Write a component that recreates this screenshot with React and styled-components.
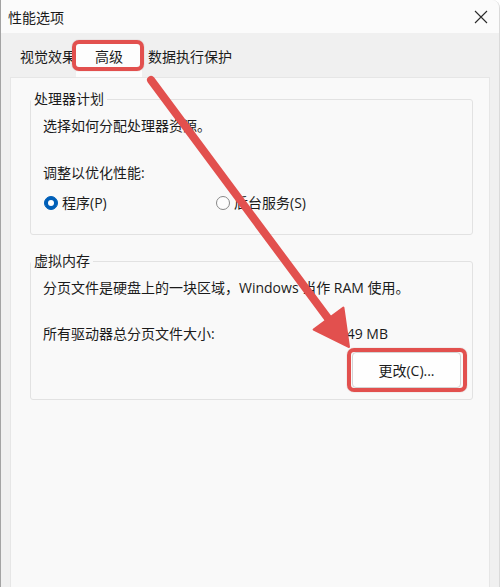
import React from 'react'
import styled, { createGlobalStyle } from 'styled-components'

const GlobalStyle = createGlobalStyle`
  * { box-sizing: border-box; }
  body {
    margin: 0;
    background: #ffffff;
    font-family: "Open Sans", "Noto Sans CJK SC", sans-serif;
    color: #1b1b1b;
  }
`

const Window = styled.div`
  position: relative;
  width: 500px;
  height: 587px;
  display: flex;
  flex-direction: column;
  background: #f0f0f0;
  border-left: 1px solid #a3a3a3;
  border-right: 1px solid #dadada;
  border-top-right-radius: 8px;
  overflow: hidden;
`

const TitleBar = styled.div`
  height: 33px;
  flex: none;
  display: flex;
  align-items: center;
  justify-content: space-between;
  padding: 0 10px 0 7px;
  background: #fbfbfb;
  font-size: 14px;
`

const CloseButton = styled.div`
  width: 16px;
  height: 16px;
  display: flex;
  align-items: center;
  justify-content: center;
  color: #2b2b2b;
`

const TabStrip = styled.div`
  height: 44px;
  flex: none;
  display: flex;
  align-items: flex-end;
  padding-left: 11px;
  font-size: 14px;
`

const Tab = styled.div`
  position: relative;
  height: 34px;
  line-height: 20px;
  padding: 4px ${({ $padR }) => $padR || 0}px 0 ${({ $padL }) => $padL || 0}px;
  width: ${({ $width }) => ($width ? `${$width}px` : 'auto')};
  text-align: ${({ $active }) => ($active ? 'center' : 'left')};
  background: ${({ $active }) => ($active ? '#fdfdfd' : 'transparent')};
  z-index: ${({ $active }) => ($active ? 1 : 0)};
  white-space: nowrap;
`

const Highlight = styled.span`
  position: absolute;
  left: ${({ $l }) => $l}px;
  top: ${({ $t }) => $t}px;
  width: ${({ $w }) => $w}px;
  height: ${({ $h }) => $h}px;
  border: 4px solid #e2504e;
  border-radius: 7px;
  box-shadow: 0 0 1px rgba(120, 20, 20, 0.5);
  pointer-events: none;
`

const Body = styled.div`
  flex: 1;
  display: flex;
  padding: 0 9px 0 9px;
`

const Panel = styled.div`
  flex: 1;
  background: #f9f9f9;
  border: 1px solid #e6e6e6;
  border-bottom: none;
  padding: 11px 16px 0 19px;
  font-size: 14px;
`

const Group = styled.fieldset`
  margin: ${({ $mt }) => $mt || 0}px 0 0 0;
  padding: 0 11px ${({ $pb }) => $pb}px 12px;
  border: 1px solid #e2e2e2;
  border-radius: 3px;
  min-width: 0;
`

const Legend = styled.legend`
  margin-left: -12px;
  padding: 0 3px;
  line-height: 20px;
  font-size: 14px;
`

const Line = styled.div`
  margin-top: ${({ $mt }) => $mt || 0}px;
  line-height: 20px;
  white-space: nowrap;
`

const SizeRow = styled.div`
  margin-top: ${({ $mt }) => $mt || 0}px;
  display: flex;
  justify-content: space-between;
  padding-right: 73px;
  line-height: 20px;
`

const RadioRow = styled.div`
  margin-top: ${({ $mt }) => $mt || 0}px;
  display: flex;
  align-items: center;
  line-height: 20px;
`

const RadioOption = styled.label`
  display: flex;
  align-items: center;
  gap: 4px;
  width: ${({ $width }) => ($width ? `${$width}px` : 'auto')};
  padding-left: 1px;
`

const RadioDot = styled.span`
  width: 14px;
  height: 14px;
  border-radius: 50%;
  display: flex;
  align-items: center;
  justify-content: center;
  background: ${({ $checked }) => ($checked ? '#005fb8' : '#fdfdfd')};
  border: 1px solid ${({ $checked }) => ($checked ? '#005fb8' : '#888888')};
  &::after {
    content: '';
    display: ${({ $checked }) => ($checked ? 'block' : 'none')};
    width: 6px;
    height: 6px;
    border-radius: 50%;
    background: #ffffff;
  }
`

const ButtonRow = styled.div`
  margin-top: 8px;
  display: flex;
  justify-content: flex-end;
`

const ChangeButton = styled.div`
  position: relative;
  width: 109px;
  height: 36px;
  display: flex;
  align-items: center;
  justify-content: center;
  background: #fefefe;
  border: 1px solid #d4d4d4;
  border-radius: 4px;
  font-size: 14px;
`

const Overlay = styled.svg`
  position: absolute;
  left: 0;
  top: 0;
  pointer-events: none;
  z-index: 5;
`

const App = () => {
  return (
    <>
      <GlobalStyle />
      <Window>
        <TitleBar>
          <span>性能选项</span>
          <CloseButton>
            <svg width="14" height="14" viewBox="0 0 14 14">
              <path d="M1 1 L13 13 M13 1 L1 13" stroke="currentColor" strokeWidth="1.1" fill="none" />
            </svg>
          </CloseButton>
        </TitleBar>

        <TabStrip>
          <Tab $padL={8} $width={64}>视觉效果</Tab>
          <Tab $active $width={66}>
            高级
            <Highlight $l={-4} $t={-3} $w={72} $h={31} />
          </Tab>
          <Tab $padL={6}>数据执行保护</Tab>
        </TabStrip>

        <Body>
          <Panel>
            <Group $pb={21}>
              <Legend>处理器计划</Legend>
              <Line $mt={7}>选择如何分配处理器资源。</Line>
              <Line $mt={27}>调整以优化性能:</Line>
              <RadioRow $mt={10}>
                <RadioOption $width={172}>
                  <RadioDot $checked />
                  程序(P)
                </RadioOption>
                <RadioOption>
                  <RadioDot />
                  后台服务(S)
                </RadioOption>
              </RadioRow>
            </Group>

            <Group $mt={16} $pb={11}>
              <Legend>虚拟内存</Legend>
              <Line $mt={7}>分页文件是硬盘上的一块区域，Windows 当作 RAM 使用。</Line>
              <SizeRow $mt={26}>
                <span>所有驱动器总分页文件大小:</span>
                <span>2049 MB</span>
              </SizeRow>
              <ButtonRow>
                <ChangeButton>
                  更改(C)...
                  <Highlight $l={-6} $t={-5} $w={120} $h={44} />
                </ChangeButton>
              </ButtonRow>
            </Group>
          </Panel>
        </Body>

        <Overlay width="500" height="587" viewBox="0 0 500 587">
          <line x1="150" y1="80" x2="329" y2="321" stroke="#e2504e" strokeWidth="8" strokeLinecap="round" />
          <polygon points="348,347 312.6,329.5 342.4,307.5" fill="#e2504e" stroke="#e2504e" strokeWidth="2" strokeLinejoin="round" />
        </Overlay>
      </Window>
    </>
  )
}

export default App
